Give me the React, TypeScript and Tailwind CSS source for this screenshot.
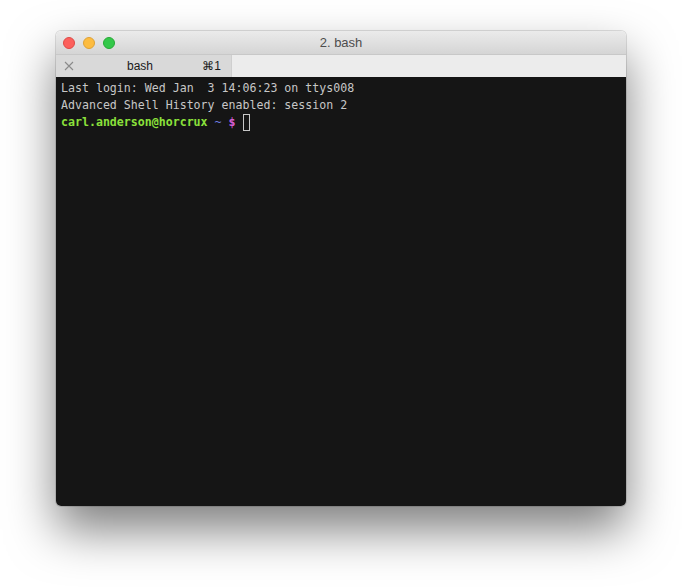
export default function App() {
  return (
    <div className="w-[682px] h-[587px] bg-white pl-[56px] pt-[31px]">
      <div className="w-[570px] h-[475px] flex flex-col rounded-[5px] overflow-hidden shadow-[0_24px_48px_rgba(0,0,0,0.5),0_0_0_1px_rgba(0,0,0,0.12)]">
        {/* Title bar */}
        <div className="relative h-[24px] flex items-center justify-center bg-gradient-to-b from-[#ebebeb] to-[#d5d5d5] border-b border-[#c8c8c8]">
          <div className="absolute left-[7px] top-[6px] flex gap-[8px]">
            <span className="w-[12px] h-[12px] rounded-full bg-[#fc605c] border border-[#de4a46]" />
            <span className="w-[12px] h-[12px] rounded-full bg-[#fdbc40] border border-[#dea236]" />
            <span className="w-[12px] h-[12px] rounded-full bg-[#34c84a] border border-[#27aa35]" />
          </div>
          <span className="text-[13px] text-[#4d4d4d] font-['Liberation_Sans',sans-serif]">2. bash</span>
        </div>
        {/* Tab bar */}
        <div className="h-[22px] flex bg-[#ececec] font-['Liberation_Sans',sans-serif] text-[12px] text-[#1a1a1a]">
          <div className="w-[176px] flex items-center bg-[#d9d9d9] border-r border-[#cfcfcf]">
            <svg width="10" height="10" viewBox="0 0 10 10" className="ml-[8px]">
              <path d="M1 1 L9 9 M9 1 L1 9" stroke="#8a8a8a" strokeWidth="1.1" />
            </svg>
            <span className="ml-[53px]">bash</span>
            <span className="ml-auto mr-[10px]">⌘1</span>
          </div>
        </div>
        {/* Terminal */}
        <div className="flex-1 bg-[#151515] px-[5px] pt-[3px] font-['DejaVu_Sans_Mono',monospace] text-[11.6px] leading-[17px] text-[#c7c7c7] whitespace-pre">
          <div>Last login: Wed Jan  3 14:06:23 on ttys008</div>
          <div>Advanced Shell History enabled: session 2</div>
          <div className="flex items-center">
            <span className="font-bold text-[#8be13b]">carl.anderson@horcrux</span>
            <span className="text-[#6f7de0]"> ~ </span>
            <span className="font-bold text-[#d65fd6]">$</span>
            <span> </span>
            <span className="inline-block w-[7px] h-[17px] border border-[#c7c7c7]" />
          </div>
        </div>
      </div>
    </div>
  );
}
